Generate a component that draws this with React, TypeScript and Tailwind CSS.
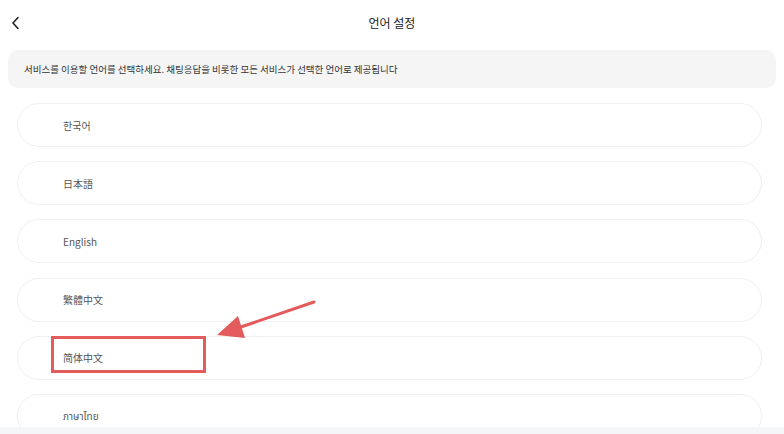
import React from "react";

const languages = ["한국어", "日本語", "English", "繁體中文", "简体中文", "ภาษาไทย"];

const font = "font-['Noto_Sans_CJK_KR','Noto_Sans','Noto_Sans_Thai',sans-serif]";

const App = () => {
  return (
    <div className={`relative flex h-[434px] w-[784px] flex-col overflow-hidden bg-white ${font}`}>
      <div className="flex-1 overflow-hidden">
        <header className="relative flex h-[46px] items-center justify-center">
          <button className="absolute left-[10px] top-[15px] text-[#222]">
            <svg width="12" height="16" viewBox="0 0 12 16" fill="none" stroke="currentColor" strokeWidth={1.6} strokeLinecap="round" strokeLinejoin="round">
              <path d="M8 2.5 3 8l5 5.5" />
            </svg>
          </button>
          <h1 className="text-[12px] text-[#222]">언어 설정</h1>
        </header>

        <div className="mx-2 mt-[4px] flex h-[38px] items-center rounded-[10px] bg-[#f5f5f5] px-4">
          <p className="text-[9.5px] text-[#333]">
            서비스를 이용할 언어를 선택하세요. 채팅응답을 비롯한 모든 서비스가 선택한 언어로 제공됩니다
          </p>
        </div>

        <ul className="mt-[15px] flex flex-col gap-[14.2px] pl-[17px] pr-[22px]">
          {languages.map((lang) => (
            <li
              key={lang}
              className="flex h-[44px] items-center rounded-full border border-[#efefef] pl-[45px] text-[10px] text-[#555]"
            >
              {lang}
            </li>
          ))}
        </ul>
      </div>
      <div className="h-[7px] bg-[#f5f6f8]" />

      {/* annotation */}
      <div className="absolute left-[51px] top-[336px] h-[37px] w-[155px] border-[3px] border-[#e45b5b]" />
      <svg className="absolute left-0 top-0" width="784" height="434" viewBox="0 0 784 434">
        <line x1="314" y1="302" x2="238" y2="328" stroke="#e45b5b" strokeWidth="3" strokeLinecap="round" />
        <polygon points="217,335 238,316 245,338" fill="#e45b5b" />
      </svg>
    </div>
  );
};

export default App;
